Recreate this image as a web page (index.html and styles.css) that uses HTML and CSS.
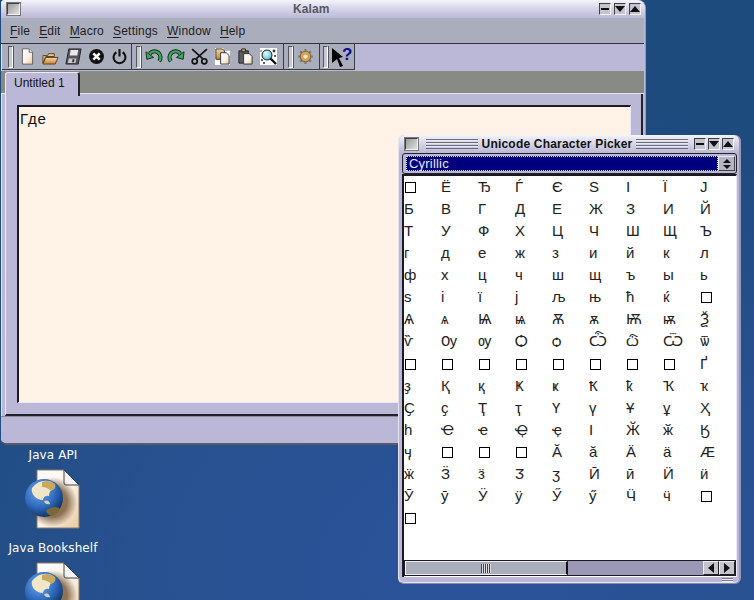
FILE: index.html
```html
<!DOCTYPE html>
<html lang="en">
<head>
<meta charset="utf-8">
<title>Kalam</title>
<link rel="stylesheet" href="styles.css">
</head>
<body>
<svg class="defs" width="0" height="0" aria-hidden="true">
  <defs>
    <linearGradient id="paper" x1="0" y1="0" x2="1" y2="1"><stop offset="0" stop-color="#fff"/><stop offset=".55" stop-color="#fbf1e6"/><stop offset="1" stop-color="#e9c9a0"/></linearGradient>
    <radialGradient id="sea" cx=".38" cy=".32" r=".75"><stop offset="0" stop-color="#6fa8e8"/><stop offset=".55" stop-color="#2f6cc0"/><stop offset=".9" stop-color="#143a70"/><stop offset="1" stop-color="#0c1d38"/></radialGradient>
    <radialGradient id="shade" cx=".5" cy=".5" r=".5"><stop offset=".6" stop-color="#6b4a2a" stop-opacity=".75"/><stop offset="1" stop-color="#6b4a2a" stop-opacity="0"/></radialGradient>
    <linearGradient id="folder" x1="0" y1="0" x2="0" y2="1"><stop offset="0" stop-color="#f3d9a0"/><stop offset="1" stop-color="#c8813a"/></linearGradient>
    <radialGradient id="lens" cx=".4" cy=".35" r=".7"><stop offset="0" stop-color="#e8ffff"/><stop offset="1" stop-color="#4fb8c8"/></radialGradient>
    <symbol id="doc-globe" viewBox="0 0 60 60">
      <path d="M12 1H39L54 16V59H12Z" fill="url(#paper)" stroke="#8a7a68"/>
      <path d="M39 1L54 16H41Q39 16 39 14Z" fill="#f4f4f4" stroke="#444"/>
      <ellipse cx="27" cy="33" rx="25" ry="25" fill="url(#shade)"/>
      <circle cx="19" cy="29" r="19" fill="url(#sea)"/>
      <path d="M7 19Q14 10 24 12Q31 14 28 20Q24 22 24 27Q19 26 18 31Q13 31 9 27Q6 23 7 19Z" fill="#f0e6c8"/>
      <path d="M17 13Q25 10 30 15Q32 20 26 22Q22 18 17 18Z" fill="#c8a860"/>
      <path d="M19 32Q24 30 25 35Q20 36 19 32Z" fill="#d8d0b0"/>
      <path d="M21 42Q27 36 34 39Q35 44 28 47Q23 47 21 42Z" fill="#7a6a3a"/>
    </symbol>
  </defs>
</svg>

<div class="icon icon-api">
  <span class="icon-label">Java API</span>
  <svg class="icon-art" viewBox="0 0 60 60"><use href="#doc-globe"/></svg>
</div>
<div class="icon icon-book">
  <span class="icon-label">Java Bookshelf</span>
  <svg class="icon-art" viewBox="0 0 60 60"><use href="#doc-globe"/></svg>
</div>

<section class="window main-window">
  <header class="titlebar">
    <span class="wbtn wbtn-menu"></span>
    <span class="title">Kalam</span>
    <span class="wbtns">
      <span class="wbtn"><i class="g-min"></i></span>
      <span class="wbtn"><i class="g-down"></i></span>
      <span class="wbtn"><i class="g-up"></i></span>
    </span>
  </header>
  <nav class="menubar">
    <span class="menu"><u>F</u>ile</span>
    <span class="menu"><u>E</u>dit</span>
    <span class="menu"><u>M</u>acro</span>
    <span class="menu"><u>S</u>ettings</span>
    <span class="menu"><u>W</u>indow</span>
    <span class="menu"><u>H</u>elp</span>
  </nav>
  <div class="toolbars">
    <div class="tb tb1">
      <span class="handle"></span>
      <span class="tool"><svg viewBox="0 0 16 20"><path d="M2 1H10L14 5V19H2Z" fill="url(#paper)" stroke="#555"/><path d="M10 1V5H14" fill="#eee" stroke="#555"/></svg></span>
      <span class="tool"><svg viewBox="0 0 18 18"><path d="M1 8H6L7 6H13V9H4L1 16Z" fill="#e8c98a" stroke="#5a4020"/><path d="M1 17L4 10H17L14 17Z" fill="url(#folder)" stroke="#5a4020"/></svg></span>
      <span class="tool"><svg viewBox="0 0 18 18"><path d="M4 1H17L14 17H1Z" fill="#55565c" stroke="#222"/><path d="M6 2H14L13 8H5Z" fill="#e8e8ee"/><path d="M4 11H12L11 16H3Z" fill="#c8c8d0"/><path d="M8 12H10L9.5 15H7.5Z" fill="#333"/></svg></span>
      <span class="tool"><svg viewBox="0 0 16 16"><circle cx="8" cy="8" r="7" fill="#111"/><path d="M5 5L11 11M11 5L5 11" stroke="#fff" stroke-width="2.4"/></svg></span>
      <span class="tool"><svg viewBox="0 0 16 16"><path d="M5 4A5.6 5.6 0 1 0 11 4" fill="none" stroke="#111" stroke-width="2"/><path d="M8 1V8" stroke="#111" stroke-width="2"/></svg></span>
    </div>
    <div class="tb tb2">
      <span class="handle"></span>
      <span class="tool"><svg viewBox="0 0 18 16"><path d="M15 13A6.2 6.2 0 0 0 5 5" fill="none" stroke="#0d2a14" stroke-width="4.4"/><path d="M15 13A6.2 6.2 0 0 0 5 5" fill="none" stroke="#3fa860" stroke-width="2.4"/><path d="M1 3L2 11L9 9Z" fill="#3fa860" stroke="#0d2a14"/></svg></span>
      <span class="tool"><svg viewBox="0 0 18 16"><path d="M3 13A6.2 6.2 0 0 1 13 5" fill="none" stroke="#0d2a14" stroke-width="4.4"/><path d="M3 13A6.2 6.2 0 0 1 13 5" fill="none" stroke="#3fa860" stroke-width="2.4"/><path d="M17 3L16 11L9 9Z" fill="#3fa860" stroke="#0d2a14"/></svg></span>
      <span class="tool"><svg viewBox="0 0 16 16"><g fill="none" stroke="#111" stroke-width="1.6"><path d="M15 1L5 10M1 1L11 10"/><circle cx="3.5" cy="12.5" r="2.4"/><circle cx="12.5" cy="12.5" r="2.4"/></g></svg></span>
      <span class="tool"><svg viewBox="0 0 16 18"><path d="M0 0H9V3H16V18H0Z" fill="#fff"/><path d="M1 1H8L10 3V12H1Z" fill="url(#folder)" stroke="#333"/><path d="M6 5H12L15 8V17H6Z" fill="url(#paper)" stroke="#333"/></svg></span>
      <span class="tool"><svg viewBox="0 0 16 18"><path d="M1 3H11V16H1Z" fill="#5a5c60" stroke="#222"/><path d="M4 1H8V4H4Z" fill="#c8a860" stroke="#222"/><path d="M6 6H12L15 9V17H6Z" fill="url(#paper)" stroke="#333"/></svg></span>
      <span class="tool"><svg viewBox="0 0 17 17"><rect width="17" height="17" fill="#fff"/><g fill="#333"><circle cx="2" cy="12" r="1"/><circle cx="14" cy="3" r="1.4"/><circle cx="4" cy="15" r="1"/><circle cx="15" cy="8" r="1"/><circle cx="1" cy="3" r=".8"/></g><path d="M10 10L16 16" stroke="#111" stroke-width="2.4"/><circle cx="7" cy="7" r="5" fill="url(#lens)" stroke="#222"/></svg></span>
    </div>
    <div class="tb tb3">
      <span class="handle"></span>
      <span class="tool"><svg viewBox="0 0 16 16"><g stroke="#7d7a72" stroke-width="2"><path d="M8 1V15M1 8H15M3 3L13 13M13 3L3 13"/></g><circle cx="8" cy="8" r="5" fill="#d8a050" stroke="#7a6a50"/><circle cx="8" cy="8" r="2" fill="#f8e8c8"/></svg></span>
    </div>
    <div class="tb tb4">
      <span class="handle"></span>
      <span class="tool tool-help"><svg viewBox="0 0 22 22"><path d="M1 2L12 11L8 12L12 20L9 21L6 13L1 17Z" fill="#000"/><text x="11" y="14" class="help-q">?</text></svg></span>
    </div>
  </div>
  <div class="tabstrip"><div class="tab">Untitled 1</div></div>
  <div class="pane">
    <div class="editor">Где</div>
  </div>
  <div class="statusbar"></div>
</section>

<section class="window picker">
  <header class="titlebar picker-title">
    <span class="wbtn wbtn-menu"></span>
    <span class="lines"></span>
    <span class="title">Unicode Character Picker</span>
    <span class="lines"></span>
    <span class="wbtns">
      <span class="wbtn"><i class="g-min"></i></span>
      <span class="wbtn"><i class="g-down"></i></span>
      <span class="wbtn"><i class="g-up"></i></span>
    </span>
  </header>
  <div class="combo">
    <div class="combo-value"><span>Cyrillic</span></div>
    <div class="combo-spin"><i class="g-up small"></i><i class="g-down small"></i></div>
  </div>
  <div class="list">
    <div class="chars">
      <span><i class="tofu"></i></span><span>Ё</span><span>Ђ</span><span>Ѓ</span><span>Є</span><span>Ѕ</span><span>І</span><span>Ї</span><span>Ј</span>
      <span>Б</span><span>В</span><span>Г</span><span>Д</span><span>Е</span><span>Ж</span><span>З</span><span>И</span><span>Й</span>
      <span>Т</span><span>У</span><span>Ф</span><span>Х</span><span>Ц</span><span>Ч</span><span>Ш</span><span>Щ</span><span>Ъ</span>
      <span>г</span><span>д</span><span>е</span><span>ж</span><span>з</span><span>и</span><span>й</span><span>к</span><span>л</span>
      <span>ф</span><span>х</span><span>ц</span><span>ч</span><span>ш</span><span>щ</span><span>ъ</span><span>ы</span><span>ь</span>
      <span>ѕ</span><span>і</span><span>ї</span><span>ј</span><span>љ</span><span>њ</span><span>ћ</span><span>ќ</span><span><i class="tofu"></i></span>
      <span>Ѧ</span><span>ѧ</span><span>Ѩ</span><span>ѩ</span><span>Ѫ</span><span>ѫ</span><span>Ѭ</span><span>ѭ</span><span>Ѯ</span>
      <span>ѷ</span><span>Ѹ</span><span>ѹ</span><span>Ѻ</span><span>ѻ</span><span>Ѽ</span><span>ѽ</span><span>Ѿ</span><span>ѿ</span>
      <span><i class="tofu"></i></span><span><i class="tofu"></i></span><span><i class="tofu"></i></span><span><i class="tofu"></i></span><span><i class="tofu"></i></span><span><i class="tofu"></i></span><span><i class="tofu"></i></span><span><i class="tofu"></i></span><span>Ґ</span>
      <span>ҙ</span><span>Қ</span><span>қ</span><span>Ҝ</span><span>ҝ</span><span>Ҟ</span><span>ҟ</span><span>Ҡ</span><span>ҡ</span>
      <span>Ҫ</span><span>ҫ</span><span>Ҭ</span><span>ҭ</span><span>Ү</span><span>ү</span><span>Ұ</span><span>ұ</span><span>Ҳ</span>
      <span>һ</span><span>Ҽ</span><span>ҽ</span><span>Ҿ</span><span>ҿ</span><span>Ӏ</span><span>Ӂ</span><span>ӂ</span><span>Ӄ</span>
      <span>ӌ</span><span><i class="tofu"></i></span><span><i class="tofu"></i></span><span><i class="tofu"></i></span><span>Ӑ</span><span>ӑ</span><span>Ӓ</span><span>ӓ</span><span>Ӕ</span>
      <span>ӝ</span><span>Ӟ</span><span>ӟ</span><span>Ӡ</span><span>ӡ</span><span>Ӣ</span><span>ӣ</span><span>Ӥ</span><span>ӥ</span>
      <span>Ӯ</span><span>ӯ</span><span>Ӱ</span><span>ӱ</span><span>Ӳ</span><span>ӳ</span><span>Ӵ</span><span>ӵ</span><span><i class="tofu"></i></span>
      <span><i class="tofu"></i></span>
    </div>
    <div class="hscroll">
      <div class="thumb"><span class="grip"></span></div>
      <div class="trough"></div>
      <div class="arrow"><i class="g-left"></i></div>
      <div class="arrow"><i class="g-right"></i></div>
    </div>
  </div>
  <div class="picker-foot"><span class="resize"></span></div>
</section>
</body>
</html>
```

FILE: styles.css
```css
* { box-sizing: border-box; }
html, body { margin: 0; height: 100%; }
body {
  position: relative;
  width: 754px;
  height: 600px;
  overflow: hidden;
  font-family: "Liberation Sans", Arial, sans-serif;
  background: radial-gradient(ellipse 620px 480px at 62% 95%, #2b539b 0, #27518f 55%, #1d4b7e 100%);
}
.defs { position: absolute; }

/* desktop icons */
.icon { position: absolute; left: 0; width: 106px; display: flex; flex-direction: column; align-items: center; }
.icon-api { top: 447px; }
.icon-book { top: 540px; }
.icon-label { font: 12px/16px "DejaVu Sans", sans-serif; color: #fff; letter-spacing: .1px; white-space: nowrap; height: 16px; }
.icon-art { width: 60px; height: 60px; margin: 6px 0 0 25px; align-self: flex-start; flex: none; }

/* windows */
.window { position: absolute; display: flex; flex-direction: column; background: #bab8d6; }
.main-window {
  left: 1px; top: 0; width: 645px; height: 445px;
  border-radius: 4px 8px 8px 6px;
  border-right: 1px solid #9a98b8;
  border-bottom: 2px solid #5a5a68;
  box-shadow: inset 1px 0 0 #e4e3f2;
}
.titlebar {
  height: 18px; flex: none; display: flex; align-items: center; position: relative;
  background: linear-gradient(#f4f4fb 0, #dedded 35%, #bab8d6 100%);
  border-radius: 4px 8px 0 0;
  padding: 0 4px 0 6px;
}
.title { font: bold 12px/14px "Liberation Sans", sans-serif; color: #555860; }
.main-window .title { position: absolute; left: 292px; top: 2px; letter-spacing: .1px; }
.wbtns { display: flex; gap: 3px; margin-left: auto; }
.wbtn {
  width: 12px; height: 12px; display: flex; align-items: center; justify-content: center;
  background: #c4c4cc; border: 1px solid; border-color: #40404a #f4f4f8 #f4f4f8 #40404a;
}
.wbtn-menu { width: 13px; height: 12px; background: linear-gradient(135deg, #999 0, #e0e0e0 100%); outline: 1px solid #777; }
.wbtn i { display: block; }
.g-min { width: 8px; height: 2px; background: #111; }
.g-down { width: 0; height: 0; border: 5px solid transparent; border-top: 6px solid #111; border-bottom: 0; }
.g-up { width: 0; height: 0; border: 5px solid transparent; border-bottom: 6px solid #111; border-top: 0; }
.g-left { width: 0; height: 0; border: 5px solid transparent; border-right: 6px solid #111; border-left: 0; }
.g-right { width: 0; height: 0; border: 5px solid transparent; border-left: 6px solid #111; border-right: 0; }

/* menu */
.menubar {
  height: 26px; flex: none; background: #aaadbb; border-bottom: 1px solid #33333c;
  display: flex; align-items: center; padding: 1px 0 0 9px; gap: 9px; margin-right: 1px;
  font-size: 12px; color: #1c1c22;
}
.menu { letter-spacing: .2px; white-space: nowrap; }
.menu u { text-underline-offset: 2px; }

/* toolbars */
.toolbars { height: 27px; flex: none; display: flex; padding-left: 1px; margin-right: 1px; }
.tb { display: flex; align-items: center; background: #aaadbb; border-right: 1px solid #3c3c46; border-bottom: 1px solid #3c3c46; height: 26px; }
.tb1 { width: 130px; }
.tb2 { width: 152px; }
.tb3 { width: 36px; }
.tb4 { width: 35px; }
.handle {
  flex: none; width: 5px; height: 22px; margin: 0 4px 0 6px;
  background: #c8c8d2; border: 1px solid; border-color: #55555f #fff #fff #55555f; box-shadow: 1px 0 0 #55555f;
}
.tb1 .handle { margin-left: 6px; margin-right: 3px; }
.tb2 .handle { margin-left: 4px; margin-right: 1px; }
.tb3 .handle { margin-left: 4px; margin-right: 1px; }
.tb4 .handle { margin-left: 3px; margin-right: 2px; }
.tool { flex: none; width: 23px; height: 24px; display: flex; align-items: center; justify-content: center; }
.tool svg { width: 17px; height: 17px; overflow: visible; }
.tool-help svg { width: 22px; height: 22px; }
.help-q { font: bold 17px "Liberation Sans", sans-serif; fill: #0a0a8c; }

/* tabs */
.tabstrip { height: 23px; flex: none; background: #888b84; margin-right: 1px; position: relative; border-bottom: 1px solid #e4e3f2; }
.tab {
  position: absolute; left: 4px; top: 1px; width: 75px; height: 24px;
  background: #bab8d6; border-radius: 3px 3px 0 0;
  border-top: 1px solid #ecebf6; border-left: 1px solid #ecebf6; border-right: 2px solid #22222a;
  font-size: 12px; line-height: 20px; padding-left: 8px; color: #111;
}

/* editor pane */
.pane {
  flex: none; height: 322px; margin: 0 2px 0 4px; padding: 11px 11px 11px 11px;
  border-right: 2px solid #22222a; border-bottom: 2px solid #22222a;
  border-left: 1px solid #ecebf6; background: #bab8d6;
}
.editor {
  height: 100%; width: 614px;
  background: #fff2e6; border-top: 2px solid #1a1a20; border-left: 2px solid #1a1a20;
  border-right: 1px solid #e8e8f8; border-bottom: 1px solid #e8e8f8;
  font-size: 15px; letter-spacing: .8px; line-height: 16px; color: #111; padding: 4px 0 0 1px;
}
.statusbar { flex: 1; background: #bab8d6; box-shadow: inset 0 1px 0 #8a8a98; border-radius: 0 0 8px 6px; }

/* picker */
.picker {
  left: 398px; top: 135px; width: 343px; height: 449px;
  border-radius: 6px;
  border-right: 2px solid #9a98b8; border-left: 1px solid #e4e3f2; border-bottom: 1px solid #8a8aa0;
  box-shadow: inset 0 -1px 0 #e4e3f2;
}
.picker-title { height: 18px; padding: 0 5px 0 6px; border-radius: 6px 6px 0 0; }
.picker-title .title { color: #111; letter-spacing: .2px; margin: 0 4px; white-space: nowrap; }
.lines {
  flex: 1; height: 10px; margin-left: 8px;
  background: repeating-linear-gradient(#6c6c78 0 1px, #e8e8f2 1px 2px, transparent 2px 3px);
}
.picker-title .lines + .title + .lines { margin-left: 0; margin-right: 6px; }
.picker-title .wbtns { margin-left: 0; gap: 2px; }

.combo {
  flex: none; height: 21px; margin: 0 2px 0 3px; display: flex;
  border: 1px solid #22222a; border-radius: 3px; background: #bab8d6; padding: 2px 1px 2px 3px;
}
.combo-value { flex: 1; background: #00007f; outline: 1px dotted #d8d8e8; outline-offset: -1px; color: #e8e8f8; font-size: 13px; line-height: 15px; padding-left: 3px; }
.combo-value span { letter-spacing: .2px; }
.combo-spin { width: 17px; display: flex; flex-direction: column; align-items: center; justify-content: center; gap: 2px; background: #b4b4c4; border: 1px solid; border-color: #eee #444 #444 #eee; }
.g-up.small { border-width: 4px; border-bottom-width: 4px; border-top-width: 0; }
.g-down.small { border-width: 4px; border-top-width: 4px; border-bottom-width: 0; }
.combo-spin i { display: block; }

.list {
  flex: none; height: 403px; margin: 0 2px 0 3px; background: #fff;
  border-left: 2px solid #1a1a20; border-top: 2px solid #1a1a20; border-right: 1px solid #e8e8f8;
  display: flex; flex-direction: column;
}
.chars {
  flex: 1; display: grid; align-content: start;
  grid-template-columns: repeat(9, 37px);
  grid-auto-rows: 22.07px;
  font: 15px/22px "Liberation Sans", "DejaVu Sans", sans-serif; color: #222;
}
.chars span { white-space: nowrap; }
.tofu { display: inline-block; width: 11px; height: 11px; margin-left: 1px; border: 1px solid #000; vertical-align: -1px; }

.hscroll { flex: none; height: 16px; display: flex; border: 1px solid #1a1a20; margin: 0 0 1px 0; background: #9b98b7; }
.thumb { width: 163px; background: #aaadbb; border: 1px solid #eee; border-right: 2px solid #111; display: flex; align-items: center; justify-content: center; }
.grip { width: 10px; height: 9px; background: repeating-linear-gradient(90deg, #444 0 1px, #ddd 1px 2px); }
.trough { flex: 1; background: #9b98b7; }
.arrow { width: 16px; background: #c4c4d0; border: 1px solid; border-color: #eee #222 #222 #eee; display: flex; align-items: center; justify-content: center; }
.picker-foot { flex: 1; position: relative; }
.resize { position: absolute; right: 6px; bottom: 1px; width: 11px; height: 4px; background: repeating-linear-gradient(#77778a 0 1px, #f0f0f8 1px 2px); }
```
